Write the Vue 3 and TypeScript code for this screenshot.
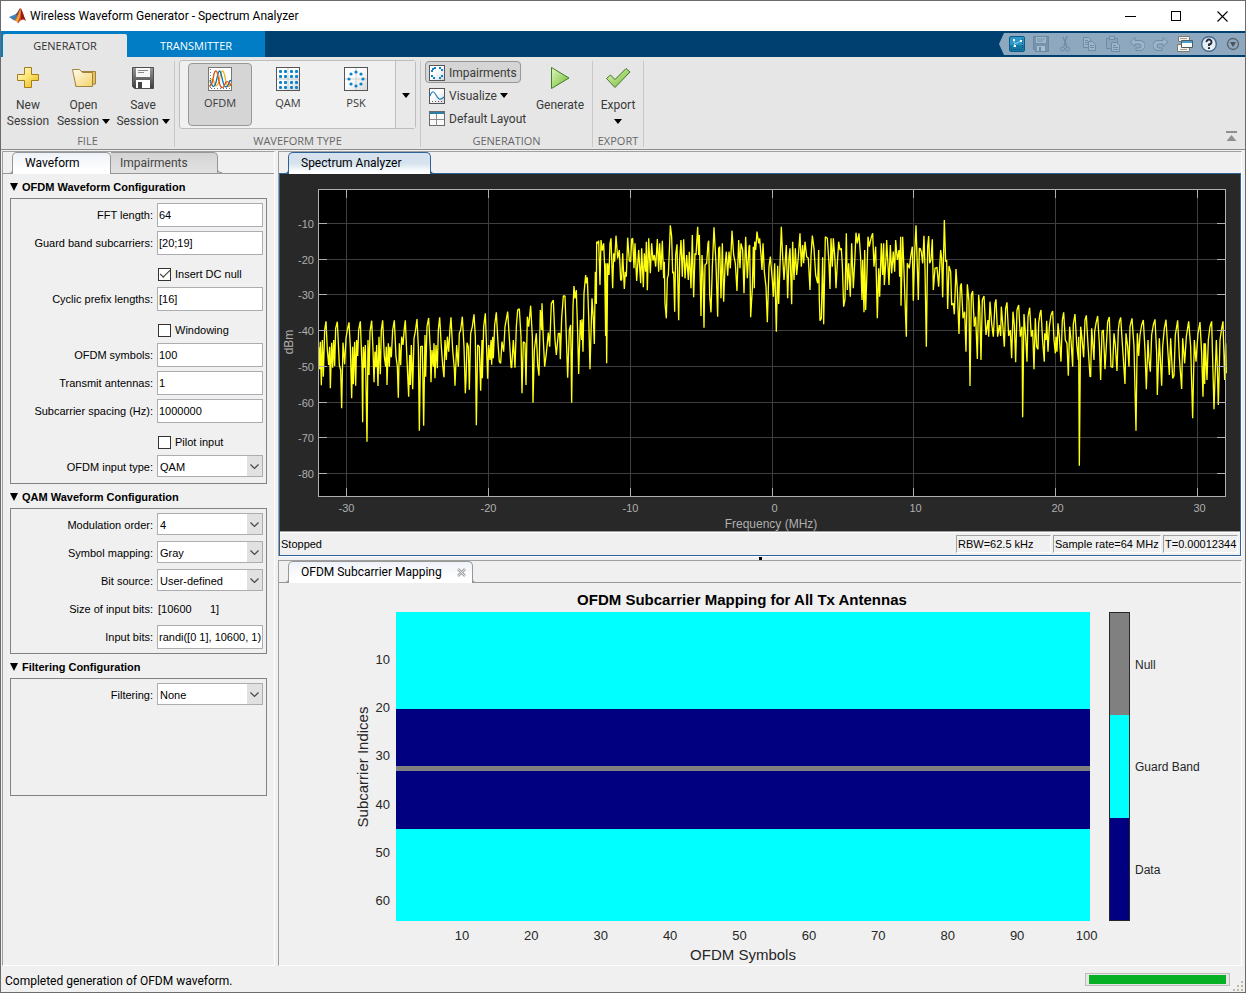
<script setup lang="ts">
import { ref } from 'vue'

interface Field {
  id: string
  kind: 'text' | 'check' | 'select' | 'value'
  label: string
  value?: string
  checked?: boolean
  options?: string[]
}

interface FieldGroup {
  title: string
  tall?: boolean
  fields: Field[]
}

const groups = ref<FieldGroup[]>([
  {
    title: 'OFDM Waveform Configuration',
    fields: [
      { id: 'fft', kind: 'text', label: 'FFT length:', value: '64' },
      { id: 'guard', kind: 'text', label: 'Guard band subcarriers:', value: '[20;19]' },
      { id: 'dcnull', kind: 'check', label: 'Insert DC null', checked: true },
      { id: 'prefix', kind: 'text', label: 'Cyclic prefix lengths:', value: '[16]' },
      { id: 'windowing', kind: 'check', label: 'Windowing', checked: false },
      { id: 'symbols', kind: 'text', label: 'OFDM symbols:', value: '100' },
      { id: 'antennas', kind: 'text', label: 'Transmit antennas:', value: '1' },
      { id: 'spacing', kind: 'text', label: 'Subcarrier spacing (Hz):', value: '1000000' },
      { id: 'pilot', kind: 'check', label: 'Pilot input', checked: false },
      { id: 'inputtype', kind: 'select', label: 'OFDM input type:', value: 'QAM', options: ['QAM'] },
    ],
  },
  {
    title: 'QAM Waveform Configuration',
    fields: [
      { id: 'order', kind: 'select', label: 'Modulation order:', value: '4', options: ['4'] },
      { id: 'mapping', kind: 'select', label: 'Symbol mapping:', value: 'Gray', options: ['Gray'] },
      { id: 'source', kind: 'select', label: 'Bit source:', value: 'User-defined', options: ['User-defined'] },
      { id: 'size', kind: 'value', label: 'Size of input bits:', value: '[10600      1]' },
      { id: 'bits', kind: 'text', label: 'Input bits:', value: 'randi([0 1], 10600, 1)' },
    ],
  },
  {
    title: 'Filtering Configuration',
    tall: true,
    fields: [
      { id: 'filtering', kind: 'select', label: 'Filtering:', value: 'None', options: ['None'] },
    ],
  },
])

/* Trace samples, stored as x,y pairs on a grid of three units per pixel. */
const lowerSideband =
  '131,590 134,658 136,575 139,706 142,570 145,680 149,540 153,514 157,600 161,645 164,590 166,715 170,578 173,653 176,570 179,648 182,535 187,515 193,645 197,660 200,775 204,578 209,643 213,565 217,540 222,517 226,590 230,745 233,590 235,703 239,575 242,707 245,570 248,618 251,540 256,514 261,650 263,817 265,590 268,653 271,585 276,875 279,570 282,675 285,545 290,512 294,600 297,697 300,605 303,652 305,585 309,708 312,560 316,673 319,540 323,511 328,620 332,650 334,590 336,705 340,580 343,650 345,590 349,622 353,540 358,511 363,620 367,650 370,743 373,580 377,646 380,560 384,585 388,535 391,511 396,630 401,740 404,615 406,705 409,585 413,718 417,565 421,545 426,507 430,590 433,842 437,590 442,588 446,827 450,555 452,680 456,530 461,504 466,600 468,697 471,600 475,650 477,580 480,685 483,585 487,655 490,540 494,502 499,590 503,645 507,682 510,570 514,630 517,560 521,605 525,535 528,502 533,600 538,655 540,707 545,585 550,650 553,550 557,540 562,500 567,590 571,730 573,690 576,578 580,590 583,719 587,550 592,530 597,493 601,560 604,826 608,585 613,590 617,722 621,570 622,685 626,530 631,490 635,600 638,686 641,585 645,630 648,570 650,644 653,560 655,625 659,525 664,487 669,580 673,635 677,640 681,575 686,605 690,530 698,485 704,580 708,650 710,654 715,570 720,653 724,530 728,480 733,476 738,560 741,730 745,575 750,580 753,705 757,500 761,530 767,467 772,560 774,758 778,600 784,550 788,645 792,677 796,480 800,540 801,460 805,570 809,650 814,610 820,548 824,590 829,460 835,450 840,570 844,615 850,550 854,550 856,628 860,505 865,438 870,438 874,560 878,683 883,540 887,525 890,758 894,470 897,408 900,445 904,420 908,550 911,672 916,510 920,570 921,508 924,605 927,430 932,375 934,400 937,382 941,500'

const passband =
  '0,508 6,295 10,355 13,432 16,215 19,312 20,125 24,130 26,122 30,255 33,120 37,152 41,130 44,200 47,408 48,190 50,490 52,310 53,190 57,225 60,130 63,115 68,265 71,160 74,185 78,107 83,175 88,150 92,240 95,240 98,160 103,267 106,215 109,230 113,113 118,183 122,185 125,118 128,115 132,205 135,130 140,243 146,150 152,250 155,145 160,262 163,160 167,215 169,125 172,271 176,115 181,220 185,130 189,182 193,165 197,200 202,117 206,215 209,130 213,210 217,122 221,235 223,185 225,310 229,355 232,235 235,225 239,130 241,76 245,110 248,220 251,215 254,335 257,165 261,133 266,361 269,180 273,120 277,230 281,118 285,235 290,165 295,240 298,155 303,265 307,105 311,292 315,160 318,165 323,80 326,165 328,105 333,348 336,165 339,220 342,383 345,195 350,190 354,130 356,122 359,285 363,337 367,200 372,82 378,190 383,350 386,145 389,140 393,295 397,130 401,305 405,200 409,155 413,227 417,155 421,205 426,92 431,165 436,190 441,273 446,120 450,205 453,130 458,150 462,280 467,110 472,235 477,140 479,135 482,352 487,265 490,140 493,265 494,125 497,150 501,95 506,130 509,115 513,165 516,210 519,130 523,215 528,260 532,367 537,200 541,170 547,240 550,290 554,190 559,395 563,197 566,312 570,195 574,80 578,170 582,240 586,180 589,135 593,295 597,175 600,145 605,313 608,125 612,240 616,145 620,225 625,170 630,100 634,200 638,135 641,190 645,125 650,170 655,175 660,270 663,170 667,107 672,145 677,225 683,250 686,150 688,300 690,362 694,355 698,172 701,373 706,110 712,115 717,190 720,267 723,115 727,200 730,115 735,180 738,265 742,190 746,125 750,150 754,145 757,195 761,320 765,298 769,100 772,270 776,190 781,290 785,130 790,265 794,190 798,98 802,130 807,100 812,175 816,300 818,180 822,337 824,150 827,330 831,215 834,110 838,140 843,115 848,100 852,200 857,140 862,355 866,205 869,290 874,130 878,225 881,130 883,255 888,175 890,120 897,255 901,135 905,220 910,155 914,215 917,120 922,180 927,150 929,230 932,110 933,317 938,110 941,185 945,300 949,410 952,190 958,205 962,170 967,140 970,302 974,160 978,76 982,200 985,300 988,145'

const upperSideband =
  '30,205 34,215 38,250 42,167 45,265 49,500 53,200 56,168 59,250 63,240 67,178 70,330 75,265 81,262 86,320 92,210 95,235 98,352 103,120 107,245 110,240 113,387 117,258 122,275 125,375 130,370 133,403 138,267 142,330 147,462 151,320 154,310 159,415 164,395 168,515 172,313 177,365 180,618 184,345 188,333 193,440 197,410 202,537 206,345 209,380 213,540 217,360 222,348 228,465 234,420 236,470 240,365 245,430 250,470 255,370 258,358 263,470 268,435 272,468 274,380 278,430 283,500 287,385 291,367 296,468 301,450 305,535 309,395 313,435 317,547 321,390 326,375 331,470 336,440 338,712 342,402 347,470 351,545 354,410 359,383 364,470 368,450 372,568 376,415 380,500 384,508 386,430 390,400 393,390 398,485 403,545 404,460 408,480 410,422 414,515 418,440 423,405 428,393 432,480 436,520 438,470 441,515 444,430 448,470 453,545 457,420 461,397 466,480 471,490 475,587 479,440 483,480 488,560 490,432 495,402 500,490 505,540 506,470 508,857 512,440 516,475 521,532 525,420 529,406 534,495 540,590 542,590 545,445 549,500 552,540 554,455 558,430 563,408 568,490 572,600 576,455 580,450 585,568 590,480 593,425 598,411 603,560 608,562 612,460 616,495 621,573 625,450 628,425 632,412 637,490 645,612 648,460 653,500 657,560 660,440 666,415 672,500 678,752 682,460 686,528 690,465 695,435 700,420 705,510 709,628 714,480 717,540 721,575 725,465 730,435 735,418 740,520 742,645 748,475 755,617 758,500 763,445 768,419 774,520 778,585 782,475 788,595 792,587 796,465 803,421 808,530 815,627 818,475 824,550 829,470 836,424 842,500 848,715 853,480 858,545 864,460 870,426 875,520 879,650 882,490 884,612 886,490 891,600 895,480 900,440 905,424 908,540 912,688 919,480 922,560 925,675 930,480 935,445 939,424 944,600 947,490 949,580'

function shift(points: string, dx: number, dy: number): string {
  return points
    .split(' ')
    .map((pair) => {
      const [x, y] = pair.split(',').map(Number)
      return `${x + dx},${y + dy}`
    })
    .join(' ')
}

const trace = [
  shift(lowerSideband, -129, -117),
  shift(passband, 816, 33),
  shift(upperSideband, 1776, -27),
].join(' ')

const powerTicks = [10, 20, 30, 40, 50, 60, 70, 80].map((db, i) => ({
  text: `-${db}`,
  y: Math.round(49 + i * 35.7) + 0.5,
}))

const frequencyTicks = [-30, -20, -10, 0, 10, 20, 30].map((mhz) => {
  const x = Math.floor(492 + mhz * 14.17) + 0.5
  return { text: String(mhz), x, labelX: mhz < 0 ? x : x + 2 }
})

const indexTicks = [10, 20, 30, 40, 50, 60].map((n) => ({ n, y: 29 + (n - 0.5) * 4.83 }))
const symbolTicks = [10, 20, 30, 40, 50, 60, 70, 80, 90, 100].map((n) => ({ n, x: 116 + (n - 0.5) * 6.94 }))

const hues = ['#0072bd', '#d95319', '#edb120']
const qamDots = [5, 10, 16, 21].flatMap((y) => [5, 10, 16, 21].map((x) => ({ x, y })))
const pskDots = [
  [13, 6], [18, 8], [20, 13], [18, 18], [13, 20], [8, 18], [6, 13], [8, 8],
]
const impairDots = [
  [4, 4], [6, 3], [11, 3], [13, 5], [3, 6], [3, 11], [5, 13], [11, 13], [13, 11],
]
</script>

<template>
  <div class="window">
    <header class="titlebar">
      <svg class="logo" width="18" height="16" viewBox="0 0 18 16">
        <path d="M0 9 6 6.500 9 9 5 12.500Z" fill="#3f7fb8" />
        <path d="M6 6.500C9 5 9.500 1 11.500 0L9 9Z" fill="#5b4a5f" />
        <path d="M11.500 0C13.500 2 15 9 17 13 14 10 12 12 9 15.500 8 13 7 12.500 5 12.500 9 9 9.500 2 11.500 0Z" fill="#d1491c" />
        <path d="M11.500 1C12 5 11 10 8.500 14.500 8 13 7 12.500 6 12.500 9 9 10 4 11.500 1Z" fill="#f2a03d" />
        <path d="M12 1C14 4 15 10 17 13 15 11 13 11 12 12Z" fill="#8e1f14" />
      </svg>
      <h1>Wireless Waveform Generator - Spectrum Analyzer</h1>
      <div class="window-buttons">
        <button aria-label="Minimize"><svg width="11" height="11"><path d="M0 5.500h11" stroke="#000" /></svg></button>
        <button aria-label="Maximize"><svg width="11" height="11"><rect x=".5" y=".5" width="9" height="9" fill="none" stroke="#000" /></svg></button>
        <button aria-label="Close"><svg width="11" height="11"><path d="M.5.5l10 10M10.500.5l-10 10" stroke="#000" stroke-width="1.100" /></svg></button>
      </div>
    </header>

    <nav class="ribbon-tabs">
      <div class="tab-group">
        <button class="ribbon-tab current">GENERATOR</button>
        <button class="ribbon-tab">TRANSMITTER</button>
      </div>
      <div class="quick-bar">
        <svg class="quick-end" width="6" height="22"><path d="M6 0v22H5L0 11 5 0Z" fill="#8da8bf" /></svg>
        <button aria-label="Plots">
          <svg width="16" height="16">
            <rect x=".5" y=".5" width="15" height="15" rx="1.500" fill="#2b97cb" stroke="#0b5c86" />
            <path d="M1 9h14v6H1Z" fill="#1676a6" />
            <path d="M4.500 11 6 7.500 4.500 4.500M5.500 8 12 5" stroke="#8ccbe8" fill="none" />
            <path d="M4 3h2v2H4zM11 4h2v2h-2zM5 9h2v2H5z" fill="#fff" />
            <path d="M2 13.500h12M13.500 3v9" stroke="#0a4f74" stroke-dasharray="1 1" fill="none" />
          </svg>
        </button>
        <button aria-label="Save">
          <svg width="16" height="16"><path d="M.5.5h15v15h-13l-2-2Z" fill="#7693ac" stroke="#6c89a3" /><path d="M3 1h10v6H3Z" fill="#9fb7cb" /><path d="M4 3h8M4 5h6" stroke="#7591a9" /><path d="M4 10h8v5H4Z" fill="#a6bccf" /><path d="M6 11h2v4H6Z" fill="#6c89a3" /></svg>
        </button>
        <button aria-label="Cut">
          <svg width="16" height="16" fill="none" stroke="#6f8ca6"><path d="M10 0 7 10M6 1l4 10" stroke-width="1.400" /><circle cx="5.500" cy="13" r="2" /><circle cx="10.500" cy="13" r="2" /></svg>
        </button>
        <button aria-label="Copy">
          <svg width="16" height="16" fill="#9db5c9" stroke="#6f8ca6"><path d="M2.500 1.500h5l2 2v8h-7Z" /><path d="M7.500 5.500h4l3 3v6h-7Z" /><path d="M4 4.500h3M4 6.500h3M4 8.500h3M9 9.500h4M9 11.500h4" /></svg>
        </button>
        <button aria-label="Paste">
          <svg width="16" height="16" fill="#9db5c9" stroke="#6f8ca6"><path d="M1.500 2.500h11v10h-11Z" fill="#89a4bb" /><path d="M4.500.5h5v3h-5Z" /><path d="M6.500 6.500h5l3 3v6h-8Z" /><path d="M8 9.500h3M8 11.500h5M8 13.500h5" /></svg>
        </button>
        <button aria-label="Undo">
          <svg width="16" height="16"><path d="M6 1.500 1 6l5 4.500V8h4a2 2 0 0 1 0 4H7v2.500h4a4.500 4.500 0 0 0 0-10H6Z" fill="#9db5c9" stroke="#6f8ca6" /></svg>
        </button>
        <button aria-label="Redo">
          <svg width="16" height="16"><path d="M10 1.500 15 6l-5 4.500V8H6a2 2 0 0 0 0 4h3v2.500H5a4.500 4.500 0 0 1 0-10h5Z" fill="#9db5c9" stroke="#6f8ca6" /></svg>
        </button>
        <button aria-label="Switch windows">
          <svg width="16" height="16"><path d="M1.500.5h11v5h-11ZM.5 8.500h12v7H.5Z" fill="#f4f1ea" stroke="#7d7a72" /><path d="M3 2.500h7M3 13.500h7" stroke="#a5a299" /><path d="M4.500 4.500h11v7h-11Z" fill="#fff" stroke="#4d5b69" /><path d="M5 5h10v2H5Z" fill="#4d9ccb" /></svg>
        </button>
        <button aria-label="Help">
          <svg width="16" height="16"><circle cx="8" cy="8" r="7.300" fill="#e9eef4" stroke="#44698c" stroke-width="1.400" /><path d="M5.500 6.200A2.500 2.500 0 1 1 8 8.500V10" fill="none" stroke="#1d2a3a" stroke-width="1.900" /><path d="M7 11.200h2v1.800H7Z" fill="#1d2a3a" /></svg>
        </button>
        <button aria-label="More">
          <svg width="16" height="16"><circle cx="8" cy="8" r="5.500" fill="none" stroke="#5a6168" stroke-width="1.300" /><path d="M5 6h6L8 11Z" fill="#4c5257" /></svg>
        </button>
      </div>
    </nav>

    <section class="ribbon">
      <div class="group file">
        <div class="group-body">
          <button class="big">
            <svg width="26" height="24">
              <defs>
                <linearGradient id="gold" x1="0" y1="0" x2="1" y2="1"><stop offset="0" stop-color="#fffbe0" /><stop offset=".5" stop-color="#fbe36c" /><stop offset="1" stop-color="#e8b417" /></linearGradient>
                <linearGradient id="folder" x1="0" y1="0" x2="1" y2="1"><stop offset="0" stop-color="#fffdf0" /><stop offset="1" stop-color="#f3d264" /></linearGradient>
                <linearGradient id="steel" x1="0" y1="0" x2="0" y2="1"><stop offset="0" stop-color="#9a9a9a" /><stop offset="1" stop-color="#3c3c3c" /></linearGradient>
                <linearGradient id="leaf" x1="0" y1="0" x2="1" y2="1"><stop offset="0" stop-color="#e2f5c0" /><stop offset="1" stop-color="#6dbb2c" /></linearGradient>
                <linearGradient id="page" x1="0" y1="0" x2="1" y2="1"><stop offset=".4" stop-color="#fff" /><stop offset="1" stop-color="#d4d8dc" /></linearGradient>
              </defs>
              <path d="M9.500 1.500h7v7h7v6h-7v7h-7v-7h-7v-6h7Z" fill="url(#gold)" stroke="#a87b1b" />
            </svg>
            <span>New</span><span>Session</span>
          </button>
          <button class="big">
            <svg width="26" height="24">
              <path d="M4.500 20V5.500h20V18Z" fill="#e6c15c" stroke="#a3843f" />
              <path d="M1.500 3.500h7l3 3h10v14H5Z" fill="url(#folder)" stroke="#a3843f" />
            </svg>
            <span>Open</span><span>Session <i class="caret"></i></span>
          </button>
          <button class="big">
            <svg width="26" height="24">
              <path d="M2.500 1.500h21v21h-19l-2-2Z" fill="url(#steel)" stroke="#4f4f4f" />
              <path d="M6 2h14v9H6Z" fill="#f7f7f7" />
              <path d="M8 4.500h10M8 6.500h6" stroke="#888" />
              <path d="M6 14h14v8H6Z" fill="#fff" /><path d="M8 16h4v6H8Z" fill="#444" />
            </svg>
            <span>Save</span><span>Session <i class="caret"></i></span>
          </button>
        </div>
        <div class="group-name">FILE</div>
      </div>

      <div class="group type">
        <div class="group-body">
          <div class="gallery">
            <button class="tile selected">
              <svg width="26" height="26">
                <rect x="1.500" y="1.500" width="23" height="23" fill="#fff" stroke="#777" />
                <g fill="none" stroke-width="1.300">
                  <path d="M3 17C4 12 6 12 7 16s2 5 4 2 2-13 4.500-13S18 16 20 19s3 1 4-2" :stroke="hues[2]" />
                  <path d="M3 14c2 6 3 8 5 5s2.500-14 4.500-14S15 15 17 19s4 1 5-2 1-3 2-2" :stroke="hues[0]" />
                  <path d="M2 20c3 0 3-3 4-7s1-8 3-8 2 9 4 14 4 2 5-1 3-4 6 2" :stroke="hues[1]" />
                </g>
                <path d="M3.500 3v20M4 22.500h20" fill="none" stroke="#777" stroke-dasharray="1 2" />
              </svg>
              OFDM
            </button>
            <button class="tile">
              <svg width="26" height="26">
                <rect x="1.500" y="1.500" width="23" height="23" fill="url(#page)" stroke="#555" />
                <path d="M2 13h22M13 2v22" stroke="#c9c9c9" />
                <rect v-for="(d, i) in qamDots" :key="i" :x="d.x - 1" :y="d.y - 1" width="3" height="3" rx="1" fill="#0b84cb" />
              </svg>
              QAM
            </button>
            <button class="tile">
              <svg width="26" height="26">
                <rect x="1.500" y="1.500" width="23" height="23" fill="url(#page)" stroke="#555" />
                <path d="M2 13h22M13 2v22" stroke="#cfcfcf" />
                <circle v-for="(d, i) in pskDots" :key="i" :cx="d[0]" :cy="d[1]" r="1.600" fill="#0b84cb" />
              </svg>
              PSK
            </button>
            <button class="gallery-more" aria-label="More waveform types"><i class="caret"></i></button>
          </div>
        </div>
        <div class="group-name">WAVEFORM TYPE</div>
      </div>

      <div class="group generation">
        <div class="group-body">
          <div class="stack">
            <button class="small pressed">
              <svg width="16" height="16"><rect x=".5" y=".5" width="15" height="15" fill="url(#page)" stroke="#555" /><rect v-for="(d, i) in impairDots" :key="i" :x="d[0] - 1" :y="d[1] - 1" width="2" height="2" fill="#0b84cb" /></svg>
              Impairments
            </button>
            <button class="small">
              <svg width="16" height="16"><rect x=".5" y=".5" width="15" height="15" fill="url(#page)" stroke="#555" /><path d="M1 8C3 2 5 3 7 7s4 6 8 2" fill="none" stroke="#1d7fc0" stroke-width="1.200" /><path d="M3 13.500h12" stroke="#555" stroke-dasharray="1 2" /></svg>
              Visualize <i class="caret"></i>
            </button>
            <button class="small">
              <svg width="16" height="16"><rect x=".5" y=".5" width="15" height="14" fill="#fafafa" stroke="#6b6b6b" /><path d="M1 1h14v2H1Z" fill="#2e7da6" /><path d="M1 8.500h14M7.500 3v12" stroke="#8b8b8b" /></svg>
              Default Layout
            </button>
          </div>
          <button class="big">
            <svg width="26" height="24"><path d="M4.500 1.500 22 12 4.500 22.500Z" fill="url(#leaf)" stroke="#3f7f2a" /></svg>
            <span>Generate</span>
          </button>
        </div>
        <div class="group-name">GENERATION</div>
      </div>

      <div class="group export">
        <div class="group-body">
          <button class="big">
            <svg width="26" height="24"><path d="M1.500 12.500 5.500 9l4.500 4.500L21 2.500 25 6 10 21.500Z" fill="url(#leaf)" stroke="#47712f" /></svg>
            <span>Export</span><span><i class="caret"></i></span>
          </button>
        </div>
        <div class="group-name">EXPORT</div>
      </div>

      <button class="collapse" aria-label="Collapse toolstrip">
        <svg width="11" height="11"><path d="M0 0h11v2H0ZM5.500 4 10.500 10H.5Z" fill="#8f8f8f" /></svg>
      </button>
    </section>

    <main class="workspace">
      <aside class="side">
        <div class="tabs">
          <button class="tab active">Waveform</button>
          <button class="tab idle">Impairments</button>
        </div>
        <form class="settings" @submit.prevent>
          <section v-for="g in groups" :key="g.title">
            <h2><svg width="8" height="8"><path d="M0 0h8L4 8Z" /></svg>{{ g.title }}</h2>
            <div class="box" :class="{ tall: g.tall }">
              <div v-for="f in g.fields" :key="f.id" class="row">
                <template v-if="f.kind === 'check'">
                  <div class="check">
                    <input :id="f.id" v-model="f.checked" type="checkbox" />
                    <label :for="f.id">{{ f.label }}</label>
                  </div>
                </template>
                <template v-else>
                  <label :for="f.id">{{ f.label }}</label>
                  <input v-if="f.kind === 'text'" :id="f.id" v-model="f.value" type="text" />
                  <div v-else-if="f.kind === 'select'" class="drop">
                    <select :id="f.id" v-model="f.value">
                      <option v-for="o in f.options" :key="o">{{ o }}</option>
                    </select>
                    <svg width="9" height="8"><path d="M.5 2.500l4 4 4-4" fill="none" stroke="#444" stroke-width="1.200" /></svg>
                  </div>
                  <output v-else :id="f.id">{{ f.value }}</output>
                </template>
              </div>
            </div>
          </section>
        </form>
      </aside>

      <div class="docs">
        <section class="doc focused">
          <div class="tabs">
            <button class="tab active wide">Spectrum Analyzer</button>
          </div>
          <div class="scope">
            <svg class="chart" viewBox="0 0 960 357" role="img" aria-label="Power spectrum in dBm">
              <rect x="38.5" y="15.500" width="907" height="307" fill="#000" />
              <g stroke="#3f3f3f">
                <path v-for="t in powerTicks" :key="t.text" :d="`M39 ${t.y}H945`" />
                <path v-for="t in frequencyTicks" :key="t.text" :d="`M${t.x} 16V322`" />
              </g>
              <g transform="translate(38 15) scale(0.33333)">
                <polyline :points="trace" fill="none" stroke="#ffff11" stroke-width="4" stroke-linejoin="bevel" />
              </g>
              <g stroke="#afafaf" fill="none">
                <path v-for="t in powerTicks" :key="t.text" :d="`M38 ${t.y}h9M946 ${t.y}h-9`" />
                <path v-for="t in frequencyTicks" :key="t.text" :d="`M${t.x} 15v9M${t.x} 323v-9`" />
                <rect x="38.500" y="15.500" width="907" height="307" />
              </g>
              <g class="dark-ticks">
                <text v-for="t in powerTicks" :key="t.text" x="34" :y="t.y + 4" text-anchor="end">{{ t.text }}</text>
                <text v-for="t in frequencyTicks" :key="t.text" :x="t.labelX" y="338" text-anchor="middle">{{ t.text }}</text>
                <text class="dark-title" x="491" y="354" text-anchor="middle">Frequency (MHz)</text>
                <text class="dark-title" transform="translate(13 168) rotate(-90)" text-anchor="middle">dBm</text>
              </g>
            </svg>
            <div class="scope-status">
              <span class="state">Stopped</span>
              <span class="cell rbw">RBW=62.5 kHz</span>
              <span class="cell rate">Sample rate=64 MHz</span>
              <span class="cell">T=0.00012344</span>
            </div>
          </div>
        </section>

        <div class="splitter"><i></i></div>

        <section class="doc mapping">
          <div class="tabs">
            <button class="tab active closable">
              OFDM Subcarrier Mapping
              <svg width="9" height="9"><path d="M1 1l7 7M8 1 1 8" stroke="#a5a5a5" stroke-width="2.600" /><path d="M1 1l7 7M8 1 1 8" stroke="#eee" stroke-width=".8" /></svg>
            </button>
          </div>
          <svg class="chart" viewBox="0 0 962 381" role="img" aria-label="OFDM subcarrier mapping for all Tx antennas">
            <text class="map-title" x="463" y="22" text-anchor="middle">OFDM Subcarrier Mapping for All Tx Antennas</text>
            <rect x="117" y="29" width="694" height="309" fill="#00ffff" />
            <rect x="117" y="126" width="694" height="120" fill="#000080" />
            <rect x="117" y="183" width="694" height="5" fill="#808080" />
            <g class="map-ticks">
              <text v-for="t in indexTicks" :key="t.n" x="111" :y="t.y + 6" text-anchor="end">{{ t.n }}</text>
              <text v-for="t in symbolTicks" :key="t.n" :x="t.x + 1" y="357" text-anchor="middle">{{ t.n }}</text>
            </g>
            <text class="map-axis" x="464" y="377" text-anchor="middle">OFDM Symbols</text>
            <text class="map-axis" transform="translate(89 184) rotate(-90)" text-anchor="middle">Subcarrier Indices</text>
            <rect x="830" y="29" width="21" height="103" fill="#808080" />
            <rect x="830" y="132" width="21" height="103" fill="#00ffff" />
            <rect x="830" y="235" width="21" height="103" fill="#000080" />
            <rect x="830.500" y="29.500" width="20" height="308" fill="none" stroke="#262626" />
            <g class="key">
              <text x="856" y="86">Null</text>
              <text x="856" y="188">Guard Band</text>
              <text x="856" y="291">Data</text>
            </g>
          </svg>
        </section>
      </div>
    </main>

    <footer class="statusbar">
      <span>Completed generation of OFDM waveform.</span>
      <progress max="100" value="100" aria-label="Generation progress"></progress>
      <svg width="11" height="11"><path d="M8 0h2v2H8zM4 4h2v2H4zM8 4h2v2H8zM0 8h2v2H0zM4 8h2v2H4zM8 8h2v2H8z" fill="#bdb9a6" /></svg>
    </footer>
  </div>
</template>

<style>
body {
  margin: 0;
  background: #f0f0f0;
}
</style>

<style scoped>
* {
  box-sizing: border-box;
}
.window {
  display: flex;
  flex-direction: column;
  min-height: 100vh;
  border: 1px solid #6b6b6b;
  background: #f0f0f0;
  color: #000;
  font: 12px/16px Roboto, "Open Sans", sans-serif;
}
button {
  margin: 0;
  padding: 0;
  border: 0;
  background: none;
  color: inherit;
  font: inherit;
}
svg {
  display: block;
  flex: none;
}

.titlebar {
  display: flex;
  align-items: center;
  height: 30px;
  padding-left: 8px;
  background: #fff;
}
.titlebar h1 {
  flex: 1;
  margin: 0 0 0 3px;
  font: inherit;
}
.window-buttons {
  display: flex;
}
.window-buttons button {
  display: grid;
  place-items: center;
  width: 46px;
  height: 30px;
}

.ribbon-tabs {
  display: flex;
  justify-content: space-between;
  height: 26px;
  background: #004071;
}
.tab-group {
  display: flex;
  padding: 3px 0 0 2px;
  background: #007dc5;
}
.ribbon-tab {
  width: 138px;
  color: #fff;
  font: 11px/16px "Open Sans", sans-serif;
}
.ribbon-tab.current {
  width: 124px;
  border-radius: 2px 2px 0 0;
  background: #e6e6e6;
  color: #333;
}
.quick-bar {
  display: flex;
  align-items: center;
  height: 22px;
  margin-top: 2px;
}
.quick-bar button {
  display: grid;
  place-items: center;
  width: 24px;
  height: 22px;
  background: #8da8bf;
}

.ribbon {
  display: flex;
  height: 93px;
  border-bottom: 1px solid #8c8c8c;
  background: #e6e6e6;
  color: #3a3a3a;
}
.group {
  display: flex;
  flex-direction: column;
  justify-content: space-between;
  padding-right: 1px;
  background: linear-gradient(#c8c8c8, #c8c8c8) right 4px / 1px 86px no-repeat;
}
.group-body {
  display: flex;
}
.group-name {
  color: #666;
  font: 11px/16px "Open Sans", sans-serif;
  text-align: center;
}
.big {
  display: flex;
  flex-direction: column;
  align-items: center;
  padding-top: 9px;
}
.big svg {
  margin-bottom: 7px;
}
.big span {
  min-height: 16px;
  white-space: nowrap;
}
.caret {
  display: inline-block;
  border: 4px solid transparent;
  border-top: 5px solid #000;
  border-bottom: 0;
  vertical-align: middle;
}
.file .group-body {
  display: grid;
  grid-template-columns: 54px 57px 62px;
}
.gallery {
  display: flex;
  gap: 4px;
  height: 69px;
  margin: 3px 4px 0 4px;
  padding: 2px 0 2px 8px;
  border: 1px solid #bdbdbd;
  border-radius: 3px;
  background: #f0f0f0;
}
.tile {
  display: flex;
  flex-direction: column;
  align-items: center;
  gap: 3px;
  width: 64px;
  padding-top: 2px;
  border: 1px solid transparent;
  font: 11px/16px "Open Sans", sans-serif;
}
.tile.selected {
  border-color: #979797;
  border-radius: 4px;
  background: #d5d5d5;
}
.gallery-more {
  width: 20px;
  margin: -2px 0 -2px 3px;
  border-left: 1px solid #bdbdbd;
  background: #e9e9e9;
}
.generation .group-body {
  padding-right: 3px;
}
.generation .stack {
  display: flex;
  flex-direction: column;
  align-items: flex-start;
  gap: 1px;
  width: 110px;
  padding: 4px 0 0 4px;
}
.generation .big {
  width: 58px;
}
.small {
  display: flex;
  align-items: center;
  gap: 4px;
  height: 22px;
  padding: 1px 3px 0;
  border: 1px solid transparent;
  white-space: nowrap;
}
.small.pressed {
  border-color: #979797;
  border-radius: 4px;
  background: #d5d5d5;
}
.small .caret {
  margin-left: -1px;
}
.export .big {
  width: 50px;
}
.collapse {
  align-self: flex-end;
  margin: 0 8px 7px auto;
}

.workspace {
  display: flex;
  flex: 1;
  padding: 1px 3px 0 1px;
}
.side {
  width: 273px;
  border: 1px solid #a0a0a0;
  border-right-color: #fff;
  border-bottom-color: #fff;
}
.docs {
  display: flex;
  flex: 1;
  flex-direction: column;
  min-width: 0;
  margin-left: 3px;
}
.doc {
  border: 1px solid #a0a0a0;
  border-right-color: #fff;
  border-bottom-color: #fff;
}
.tabs {
  --line: #979797;
  display: flex;
  height: 22px;
  border-bottom: 1px solid var(--line);
}
.focused .tabs {
  --line: #2d6399;
}
.tab {
  position: relative;
  width: 107px;
  height: 22px;
  padding: 0 0 1px 9px;
  border: 1px solid var(--line);
  border-bottom: 0;
  border-radius: 5px 5px 0 0;
  color: #444;
  text-align: left;
  white-space: nowrap;
}
.tab.idle {
  height: 21px;
  border-left: 0;
  border-radius: 0 5px 0 0;
  background: linear-gradient(#d4d4d4, #e2e2e2);
}
.tab.active {
  width: 99px;
  margin-left: 9px;
  padding-left: 12px;
  background: linear-gradient(#eef2f8, #fff 80%);
  color: #000;
}
.tab.active.wide {
  width: 143px;
}
.tab.active.closable {
  display: flex;
  align-items: center;
  justify-content: space-between;
  width: 185px;
  padding-right: 6px;
}
.focused .tab.active {
  background: linear-gradient(#d6e3ef 50%, #fff 90%);
}
.tab.active::before,
.tab:last-child::after {
  content: "";
  position: absolute;
  bottom: 0;
  width: 4px;
  height: 4px;
  border-bottom: 1px solid var(--line);
}
.tab.active::before {
  right: 100%;
  border-right: 1px solid var(--line);
  border-radius: 0 0 4px 0;
}
.tab:last-child::after {
  left: 100%;
  border-left: 1px solid var(--line);
  border-radius: 0 0 0 4px;
}

.settings {
  padding: 0 7px;
  font: 11px/14px "Liberation Sans", Arial, sans-serif;
}
.settings h2 {
  display: flex;
  align-items: center;
  gap: 4px;
  height: 24px;
  margin: 0;
  padding-top: 2px;
  font: bold 11px/14px "Liberation Sans", Arial, sans-serif;
}
.box {
  display: flex;
  flex-direction: column;
  gap: 4px;
  padding: 4px 3px;
  border: 1px solid #828282;
}
.box.tall {
  min-height: 118px;
}
.row {
  display: grid;
  grid-template-columns: 1fr 106px;
  gap: 4px;
  align-items: center;
  height: 24px;
  text-align: right;
}
.row input[type="text"],
.row select {
  width: 100%;
  height: 24px;
  margin: 0;
  padding: 0 0 0 1px;
  border: 1px solid #abadb3;
  border-radius: 0;
  background: #fff;
  color: #000;
  font: inherit;
}
.drop {
  display: grid;
  grid-template-columns: 1fr 18px;
  align-items: center;
  align-self: start;
}
.row .drop select {
  grid-area: 1 / 1 / 2 / 3;
  height: 22px;
  padding: 2px 0 0 2px;
  appearance: none;
  background: linear-gradient(#e1e1e1, #e1e1e1) right / 15px 100% no-repeat #fff;
}
.drop svg {
  grid-area: 1 / 2;
  z-index: 1;
  pointer-events: none;
  justify-self: center;
}
.row output {
  text-align: left;
  white-space: pre;
  padding-left: 1px;
}
.check {
  display: flex;
  grid-column: 2;
  align-items: center;
  align-self: end;
  gap: 4px;
  height: 18px;
  padding-left: 1px;
}
.check input {
  display: grid;
  place-items: center;
  width: 13px;
  height: 13px;
  margin: 0;
  border: 1px solid #333;
  appearance: none;
  background: #fff;
}
.check input:checked::before {
  content: "";
  width: 9px;
  height: 4px;
  margin-top: -3px;
  border: solid #333;
  border-width: 0 0 1px 1px;
  transform: rotate(-45deg);
}

.scope {
  border: 1px solid #2d6399;
  border-top: 0;
  background: #282828;
}
.chart {
  width: 100%;
  height: auto;
  font-family: "Liberation Sans", Arial, sans-serif;
}
.dark-ticks {
  fill: #afafaf;
  font-size: 11px;
}
.dark-title {
  font-size: 12px;
}
.scope-status {
  display: flex;
  align-items: center;
  gap: 2px;
  height: 24px;
  padding: 1px 2px 0 1px;
  border-top: 1px solid #a0a0a0;
  background: #f0f0f0;
  box-shadow: inset 0 1px #fff;
  font: 11px/14px "Liberation Sans", Arial, sans-serif;
}
.state {
  flex: 1;
}
.cell {
  width: 75px;
  height: 18px;
  padding: 1px 1px 0;
  border: 1px solid #a0a0a0;
  border-right-color: #fff;
  border-bottom-color: #fff;
  white-space: nowrap;
}
.cell.rbw {
  width: 95px;
}
.cell.rate {
  width: 108px;
}
.splitter {
  display: grid;
  place-items: center;
  height: 3px;
}
.splitter i {
  width: 3px;
  height: 3px;
  background: #000;
}
.mapping {
  flex: 1;
}
.map-title {
  font-size: 15px;
  font-weight: bold;
}
.map-ticks {
  fill: #262626;
  font-size: 13px;
}
.map-axis {
  fill: #262626;
  font-size: 15px;
}
.key {
  fill: #262626;
  font-size: 12px;
}

.statusbar {
  display: flex;
  align-items: center;
  height: 26px;
  padding: 4px 1px 0 4px;
}
.statusbar span {
  flex: 1;
}
progress {
  width: 145px;
  height: 13px;
  margin: 0 3px 4px 0;
  padding: 1px 3px;
  border: 1px solid #bcbcbc;
  appearance: none;
  background: #e6e6e6;
}
progress::-webkit-progress-bar {
  background: #e6e6e6;
}
progress::-webkit-progress-value {
  background: #06b025;
}
.statusbar svg {
  align-self: flex-end;
}
</style>
